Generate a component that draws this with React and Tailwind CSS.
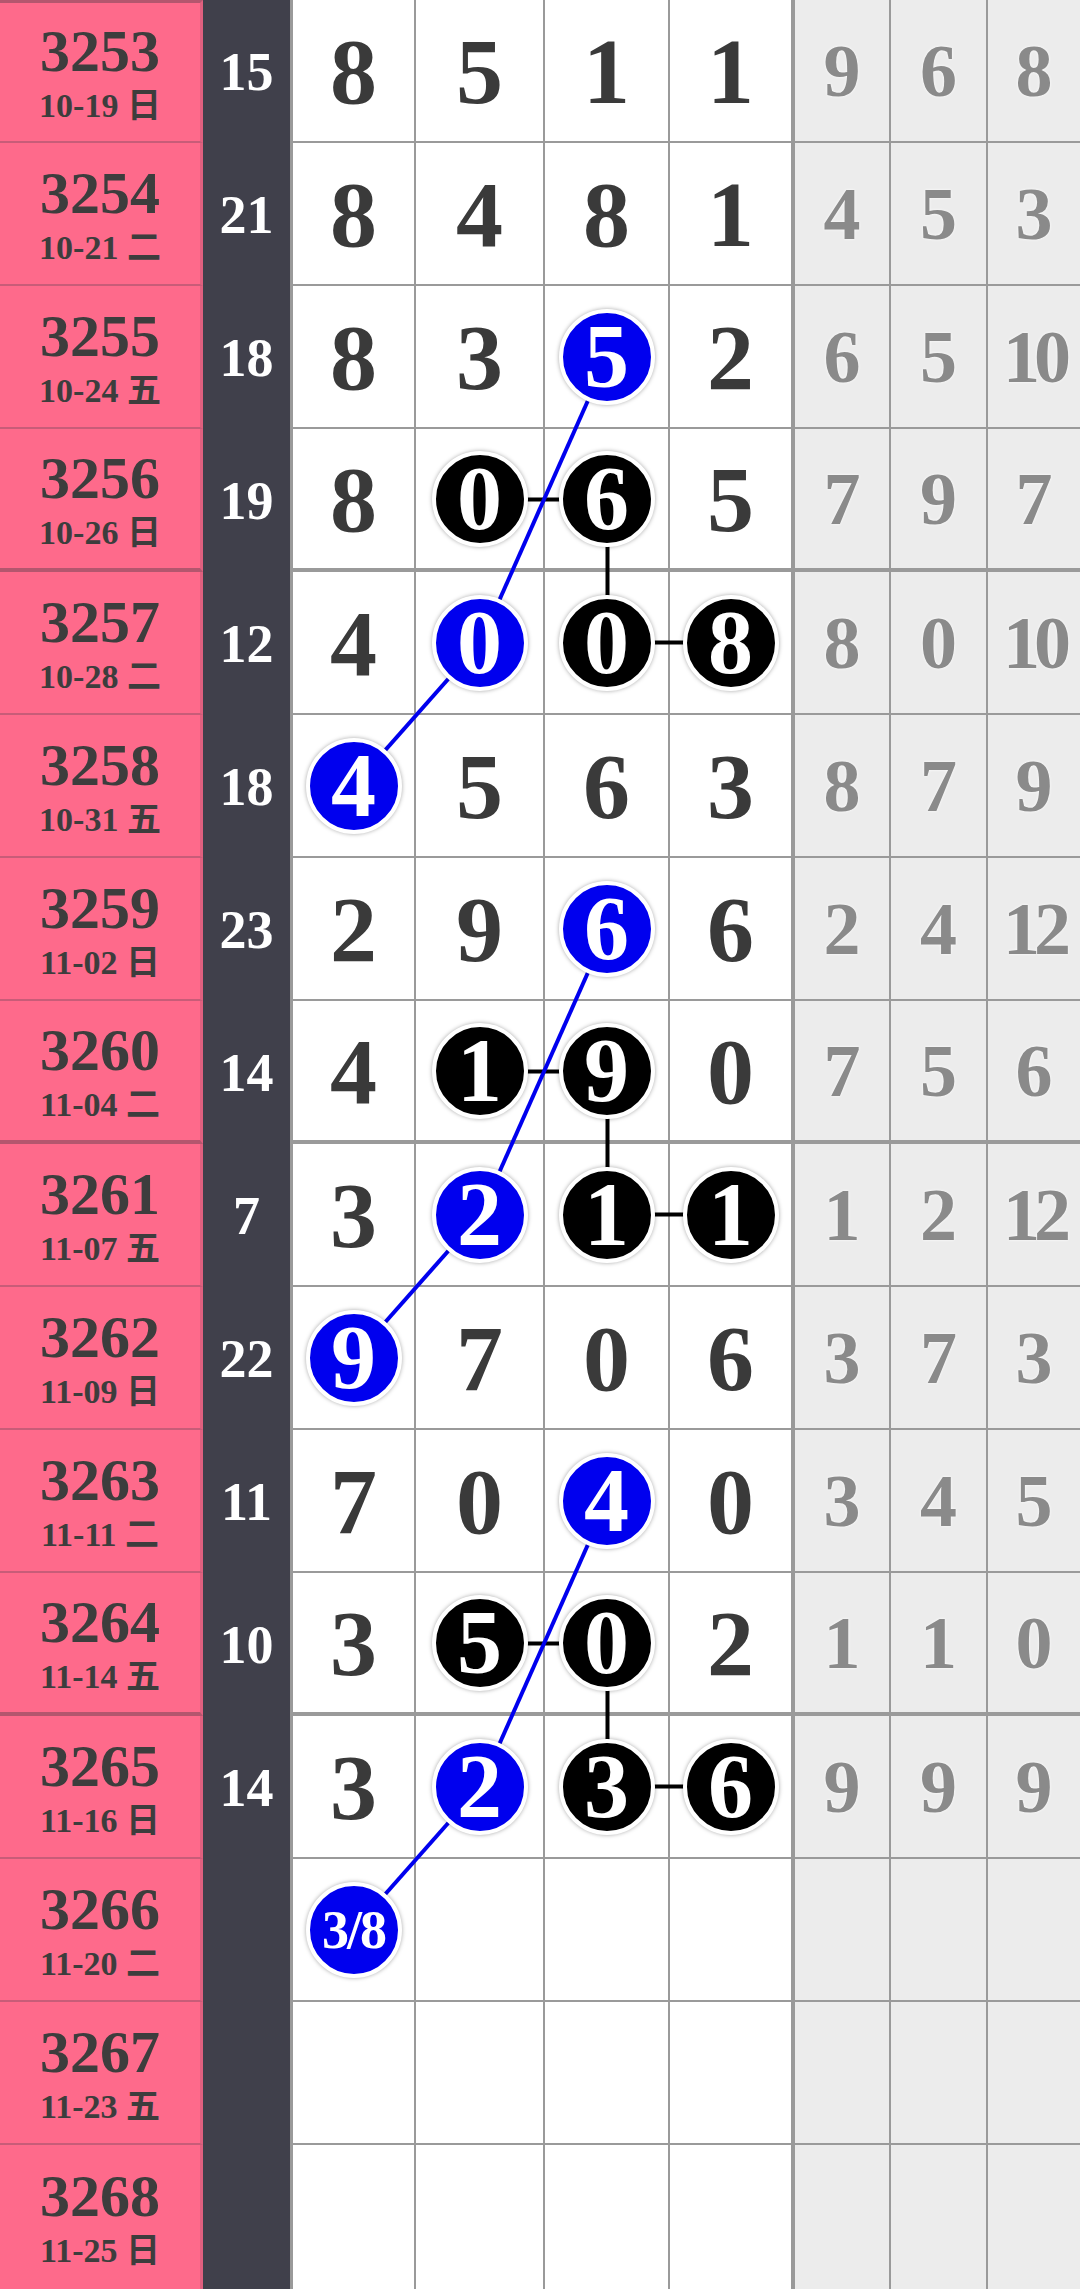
const ROWS = [
  { no: 3253, date: "10-19", wd: "日", sum: 15, n: ["8", "5", "1", "1"], m: "----", g: [9, 6, 8] },
  { no: 3254, date: "10-21", wd: "二", sum: 21, n: ["8", "4", "8", "1"], m: "----", g: [4, 5, 3] },
  { no: 3255, date: "10-24", wd: "五", sum: 18, n: ["8", "3", "5", "2"], m: "--b-", g: [6, 5, 10] },
  { no: 3256, date: "10-26", wd: "日", sum: 19, n: ["8", "0", "6", "5"], m: "-kk-", g: [7, 9, 7] },
  { no: 3257, date: "10-28", wd: "二", sum: 12, n: ["4", "0", "0", "8"], m: "-bkk", g: [8, 0, 10] },
  { no: 3258, date: "10-31", wd: "五", sum: 18, n: ["4", "5", "6", "3"], m: "b---", g: [8, 7, 9] },
  { no: 3259, date: "11-02", wd: "日", sum: 23, n: ["2", "9", "6", "6"], m: "--b-", g: [2, 4, 12] },
  { no: 3260, date: "11-04", wd: "二", sum: 14, n: ["4", "1", "9", "0"], m: "-kk-", g: [7, 5, 6] },
  { no: 3261, date: "11-07", wd: "五", sum: 7, n: ["3", "2", "1", "1"], m: "-bkk", g: [1, 2, 12] },
  { no: 3262, date: "11-09", wd: "日", sum: 22, n: ["9", "7", "0", "6"], m: "b---", g: [3, 7, 3] },
  { no: 3263, date: "11-11", wd: "二", sum: 11, n: ["7", "0", "4", "0"], m: "--b-", g: [3, 4, 5] },
  { no: 3264, date: "11-14", wd: "五", sum: 10, n: ["3", "5", "0", "2"], m: "-kk-", g: [1, 1, 0] },
  { no: 3265, date: "11-16", wd: "日", sum: 14, n: ["3", "2", "3", "6"], m: "-bkk", g: [9, 9, 9] },
  { no: 3266, date: "11-20", wd: "二", sum: "", n: ["3/8", "", "", ""], m: "b---", g: ["", "", ""] },
  { no: 3267, date: "11-23", wd: "五", sum: "", n: ["", "", "", ""], m: "----", g: ["", "", ""] },
  { no: 3268, date: "11-25", wd: "日", sum: "", n: ["", "", "", ""], m: "----", g: ["", "", ""] },
];

const WHITE_W = ["w-[126px] border-l-[3px]", "w-[129px]", "w-[125px]", "w-[125px]"];
const GRAY_W = ["w-[96px] border-r-2", "w-[97px] border-r-2", "w-[92px]"];

const COL_X = [354, 480.5, 607.5, 732.5];
const rowY = (r) => 143 * r + 70.5;

function Ball({ value, kind }) {
  const small = value.length > 1;
  return (
    <div
      className={`relative z-10 flex h-[96px] w-[96px] items-center justify-center rounded-full border-4 border-white shadow-[0_0_4px_rgba(0,0,0,0.35)] ${
        kind === "b" ? "bg-[#0000ee]" : "bg-black"
      }`}
    >
      <span className={`font-bold leading-none text-white ${small ? "text-[54px] tracking-[-2px]" : "text-[90px]"}`}>
        {value}
      </span>
    </div>
  );
}

function Links() {
  const blue = [];
  const black = [];
  [2, 6, 10].forEach((r) => {
    blue.push([COL_X[2], rowY(r), COL_X[1], rowY(r + 2)]);
    blue.push([COL_X[1], rowY(r + 2), COL_X[0], rowY(r + 3)]);
    black.push([COL_X[1], rowY(r + 1), COL_X[2], rowY(r + 1)]);
    black.push([COL_X[2], rowY(r + 1), COL_X[2], rowY(r + 2)]);
    black.push([COL_X[2], rowY(r + 2), COL_X[3], rowY(r + 2)]);
  });
  return (
    <svg className="pointer-events-none absolute left-0 top-0" width="1080" height="2289">
      {black.map(([x1, y1, x2, y2], i) => (
        <line key={"k" + i} x1={x1} y1={y1} x2={x2} y2={y2} stroke="#000" strokeWidth="4" />
      ))}
      {blue.map(([x1, y1, x2, y2], i) => (
        <line key={"b" + i} x1={x1} y1={y1} x2={x2} y2={y2} stroke="#0000ee" strokeWidth="4" />
      ))}
    </svg>
  );
}

export default function App() {
  return (
    <div className="relative w-[1080px] h-[2289px] overflow-hidden bg-white font-['Liberation_Serif','Noto_Sans_CJK_SC',serif]">
      {ROWS.map((row, r) => {
        const last = r === ROWS.length - 1;
        const thick = r % 4 === 3;
        const pinkB = last ? "" : thick ? "border-b-4 border-b-[#b4566e]" : "border-b-2 border-b-[#c85c78]";
        const gridB = last ? "" : thick ? "border-b-4" : "border-b-2";
        return (
          <div key={row.no} className={`flex ${last ? "h-[144px]" : "h-[143px]"}`}>
            {/* draw number + date */}
            <div
              className={`flex w-[203px] flex-col items-center justify-center border-r-[3px] border-r-[#e0607f] bg-[#fe6a8b] text-[#3d3d3d] ${pinkB} ${
                r === 0 ? "border-t-[3px] border-t-[#b4566e]" : ""
              }`}
            >
              <div className="text-[60px] font-bold leading-none">{row.no}</div>
              <div className="mt-2 text-[34px] font-bold leading-none">
                {row.date} {row.wd}
              </div>
            </div>

            {/* sum */}
            <div className="flex w-[87px] items-center justify-center bg-[#40404b] text-[54px] font-bold leading-none text-white">
              {row.sum}
            </div>

            {/* digits */}
            {row.n.map((v, c) => (
              <div
                key={c}
                className={`flex items-center justify-center border-[#9a9a9a] bg-white ${WHITE_W[c]} ${gridB} ${
                  c === 3 ? "border-r-4" : "border-r-2"
                }`}
              >
                {row.m[c] !== "-" ? (
                  <Ball value={v} kind={row.m[c]} />
                ) : (
                  <span className="text-[94px] font-bold leading-none text-[#3a3a3a] [text-shadow:0_0_3px_#fff]">{v}</span>
                )}
              </div>
            ))}

            {/* gray stats */}
            {row.g.map((v, c) => (
              <div
                key={"g" + c}
                className={`flex items-center justify-center border-[#9a9a9a] bg-[#ececec] ${GRAY_W[c]} ${gridB}`}
              >
                <span
                  className={`text-[74px] font-bold leading-none text-[#8a8a8a] [text-shadow:0_0_3px_#fff] ${
                    String(v).length > 1 ? "tracking-[-6px]" : ""
                  }`}
                >
                  {v}
                </span>
              </div>
            ))}
          </div>
        );
      })}
      <Links />
    </div>
  );
}
